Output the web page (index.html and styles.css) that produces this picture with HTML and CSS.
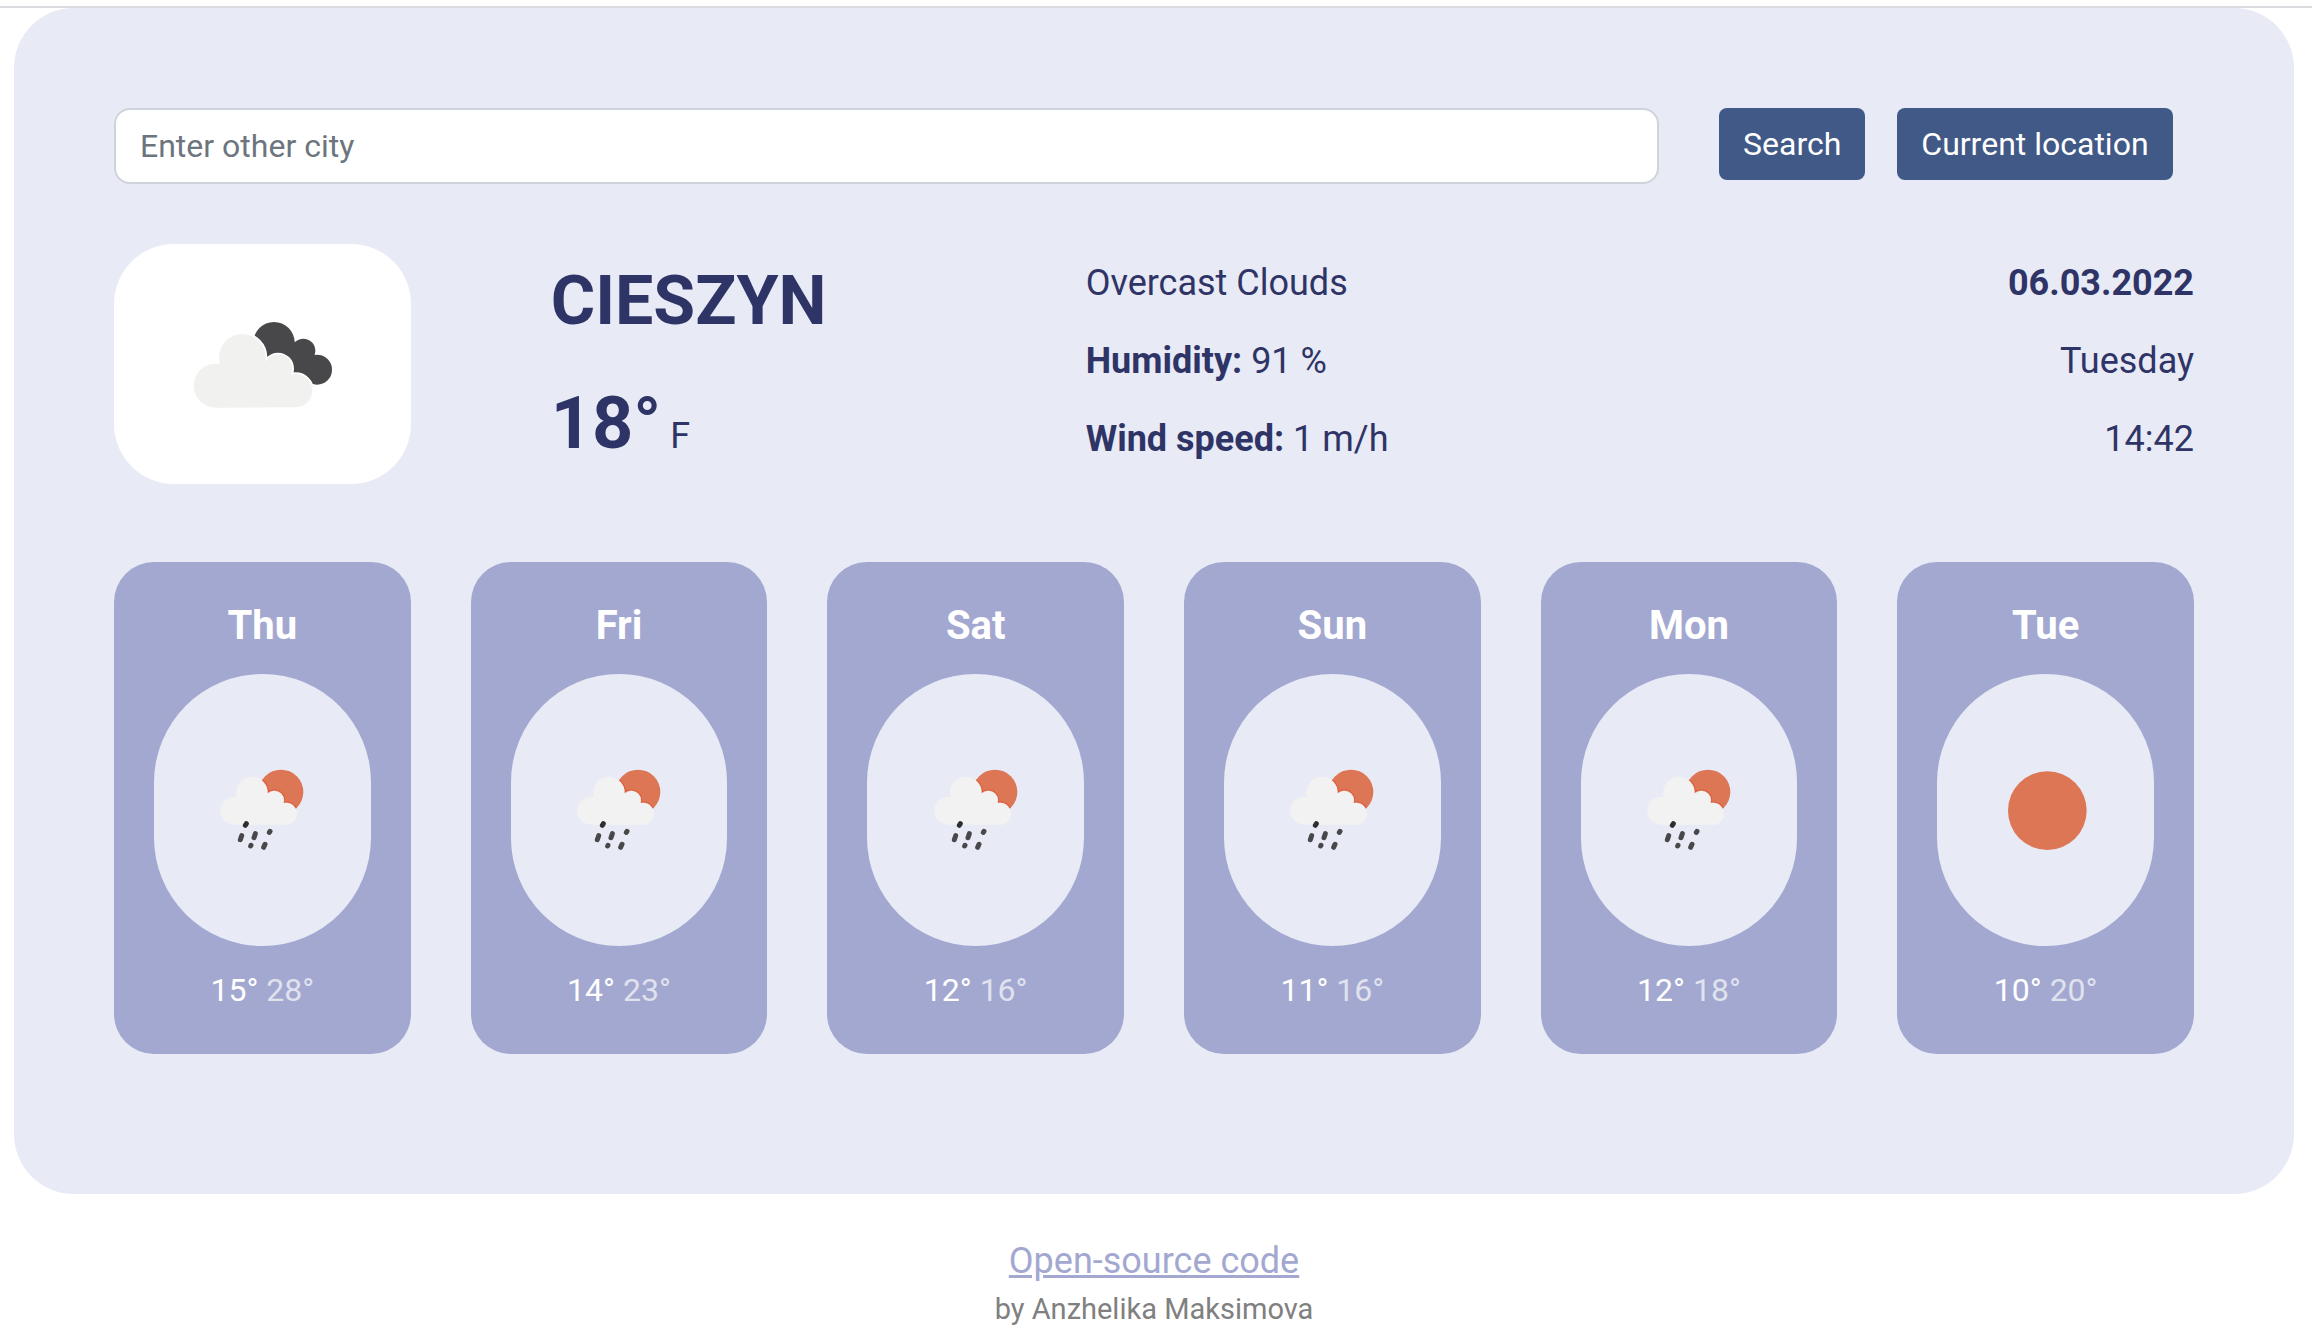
FILE: index.html
```html
<!DOCTYPE html>
<html lang="en">
<head>
  <meta charset="utf-8">
  <meta name="viewport" content="width=device-width, initial-scale=1">
  <title>Weather</title>
  <link rel="stylesheet" href="styles.css">
</head>
<body>
  <svg class="symbols" aria-hidden="true">
    <defs>
      <clipPath id="sun-clip"><circle cx="229" cy="111" r="67"/></clipPath>
      <g id="small-cloud">
        <circle cx="88" cy="167" r="41"/>
        <circle cx="142" cy="113" r="47"/>
        <circle cx="209" cy="136" r="29"/>
        <circle cx="244" cy="176" r="33"/>
        <path d="M88 209V140L142 110L209 130L244 160V209Z"/>
      </g>
    </defs>
    <symbol id="icon-rain" viewBox="22 15 300 300">
      <circle cx="229" cy="111" r="67" fill="#dd7655"/>
      <g clip-path="url(#sun-clip)">
        <use href="#small-cloud" fill="#dc5433" stroke="#dc5433" stroke-width="7"/>
      </g>
      <use href="#small-cloud" fill="#f2f2f2" stroke="#f2f2f2" stroke-width="1"/>
      <g stroke="#48484a" stroke-width="15" stroke-linecap="round">
        <path d="M125 206L122 211" stroke="#2e2e30"/>
        <path d="M111 242L107 254"/>
        <path d="M152 236L148 248"/>
        <path d="M196 229L194 232"/>
        <path d="M139 271L138 273"/>
        <path d="M181 268L177 277"/>
      </g>
    </symbol>
    <symbol id="icon-sun" viewBox="22 15 300 300">
      <circle cx="176" cy="167" r="118" fill="#dd7655"/>
    </symbol>
    <symbol id="icon-clouds" viewBox="7 12 480 360">
      <g fill="#48484a">
        <circle cx="283" cy="128" r="62"/>
        <circle cx="371" cy="152" r="36"/>
        <circle cx="412" cy="209" r="45"/>
        <path d="M224 108L283 100L345 125L400 170L412 210L398 252L340 240L250 200Z"/>
      </g>
      <g fill="#fff" stroke="#fff" stroke-width="10">
        <circle cx="108" cy="257" r="66"/>
        <circle cx="188" cy="172" r="70"/>
        <circle cx="295" cy="206" r="43"/>
        <circle cx="348" cy="272" r="50"/>
        <path d="M108 322V220L188 170L295 200L348 240V322Z"/>
      </g>
      <g fill="#f1f1f0">
        <circle cx="108" cy="257" r="66"/>
        <circle cx="188" cy="172" r="70"/>
        <circle cx="295" cy="206" r="43"/>
        <circle cx="348" cy="272" r="50"/>
        <path d="M108 323V220L188 170L295 200L348 240V322Z"/>
      </g>
    </symbol>
  </svg>

  <div class="page">
    <main class="weather">
      <form class="search">
        <input class="search-input" type="text" placeholder="Enter other city" aria-label="City" autocomplete="off">
        <div class="search-actions">
          <button class="button" type="submit">Search</button>
          <button class="button" type="button">Current location</button>
        </div>
      </form>

      <section class="current">
        <div class="current-icon">
          <svg class="icon-large" role="img" aria-label="Overcast clouds"><use href="#icon-clouds"/></svg>
        </div>
        <div class="current-place">
          <h1 class="city">Cieszyn</h1>
          <p class="temperature"><strong class="degrees">18°</strong> F</p>
        </div>
        <ul class="details">
          <li>Overcast Clouds</li>
          <li><strong>Humidity:</strong> 91 %</li>
          <li><strong>Wind speed:</strong> 1 m/h</li>
        </ul>
        <ul class="date">
          <li><strong>06.03.2022</strong></li>
          <li>Tuesday</li>
          <li>14:42</li>
        </ul>
      </section>

      <section class="forecast">
        <article class="day">
          <h2 class="day-name">Thu</h2>
          <div class="day-icon"><svg class="icon-small" role="img" aria-label="Rain"><use href="#icon-rain"/></svg></div>
          <p class="day-temps">15° <span class="temp-second">28°</span></p>
        </article>
        <article class="day">
          <h2 class="day-name">Fri</h2>
          <div class="day-icon"><svg class="icon-small" role="img" aria-label="Rain"><use href="#icon-rain"/></svg></div>
          <p class="day-temps">14° <span class="temp-second">23°</span></p>
        </article>
        <article class="day">
          <h2 class="day-name">Sat</h2>
          <div class="day-icon"><svg class="icon-small" role="img" aria-label="Rain"><use href="#icon-rain"/></svg></div>
          <p class="day-temps">12° <span class="temp-second">16°</span></p>
        </article>
        <article class="day">
          <h2 class="day-name">Sun</h2>
          <div class="day-icon"><svg class="icon-small" role="img" aria-label="Rain"><use href="#icon-rain"/></svg></div>
          <p class="day-temps">11° <span class="temp-second">16°</span></p>
        </article>
        <article class="day">
          <h2 class="day-name">Mon</h2>
          <div class="day-icon"><svg class="icon-small" role="img" aria-label="Rain"><use href="#icon-rain"/></svg></div>
          <p class="day-temps">12° <span class="temp-second">18°</span></p>
        </article>
        <article class="day">
          <h2 class="day-name">Tue</h2>
          <div class="day-icon"><svg class="icon-small" role="img" aria-label="Clear sky"><use href="#icon-sun"/></svg></div>
          <p class="day-temps">10° <span class="temp-second">20°</span></p>
        </article>
      </section>
    </main>

    <footer class="footer">
      <a class="source-link" href="#">Open-source code</a>
      <p class="author">by Anzhelika Maksimova</p>
    </footer>
  </div>
</body>
</html>
```

FILE: styles.css
```css
* {
  box-sizing: border-box;
}

body {
  margin: 0;
  padding-top: 6px;
  background: #fff;
  color: #2f3466;
  font-family: Roboto, "Liberation Sans", sans-serif;
  font-size: 36px;
  line-height: 54px;
}

h1,
h2,
p,
ul {
  margin: 0;
  padding: 0;
}

ul {
  list-style: none;
}

.symbols {
  position: absolute;
  width: 0;
  height: 0;
}

.page {
  padding: 0 18px 0 14px;
  border-top: 2px solid #dadce0;
}

.weather {
  padding: 100px 100px 140px;
  border-radius: 60px;
  background: #e8eaf6;
}

/* Shared twelve-column grid */
.search,
.current,
.forecast {
  display: grid;
  grid-template-columns: repeat(12, minmax(0, 1fr));
  column-gap: 60px;
}

.search {
  align-items: start;
  margin-bottom: 60px;
}

.search-input {
  grid-column: span 9;
  width: 100%;
  height: 76px;
  padding: 12px 24px;
  border: 2px solid #ced4da;
  border-radius: 16px;
  background: #fff;
  color: #212529;
  font-family: inherit;
  font-size: 32px;
  line-height: 48px;
}

.search-input::placeholder {
  color: #6c757d;
  opacity: 1;
}

.search-actions {
  grid-column: span 3;
  display: flex;
  gap: 32px;
}

.button {
  padding: 12px 24px;
  border: 0;
  border-radius: 8px;
  background: #415987;
  color: #fff;
  font-family: inherit;
  font-size: 32px;
  line-height: 48px;
  white-space: nowrap;
}

.current {
  margin-bottom: 78px;
}

.current-icon {
  grid-column: span 2;
  display: flex;
  align-items: center;
  justify-content: center;
  height: 240px;
  border-radius: 60px;
  background: #fff;
}

.icon-large {
  width: 160px;
  height: 120px;
}

.current-place {
  grid-column: span 3;
  display: flex;
  flex-direction: column;
  gap: 38px;
  padding: 14px 0 0 80px;
}

.city {
  font-size: 68px;
  font-weight: 700;
  line-height: 86px;
  text-transform: uppercase;
}

.temperature {
  line-height: 84px;
}

.degrees {
  font-size: 72px;
}

.details,
.date {
  display: flex;
  flex-direction: column;
  gap: 24px;
  padding-top: 12px;
}

.details {
  grid-column: span 4;
  padding-left: 80px;
}

.date {
  grid-column: span 3;
  text-align: right;
}

.day {
  grid-column: span 2;
  padding: 40px;
  border-radius: 40px;
  background: #a3a8d0;
  color: #fff;
  text-align: center;
}

.day-name {
  margin-bottom: 24px;
  font-size: 40px;
  font-weight: 700;
  line-height: 48px;
}

.day-icon {
  display: flex;
  align-items: center;
  justify-content: center;
  height: 272px;
  margin-bottom: 20px;
  border-radius: 120px;
  background: #e8eaf6;
}

.icon-small {
  width: 100px;
  height: 100px;
}

.day-temps {
  font-size: 32px;
  line-height: 48px;
}

.temp-second {
  color: #e0e2ee;
}

.footer {
  padding-top: 40px;
  text-align: center;
}

.source-link {
  color: #a3a8d0;
}

.author {
  color: #808080;
  font-size: 29px;
  line-height: 42px;
}
```
